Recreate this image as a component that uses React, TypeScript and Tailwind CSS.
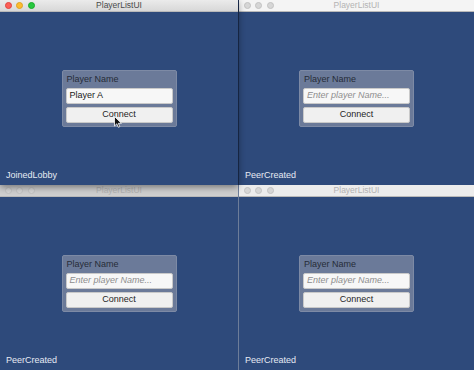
import React from 'react';

type WinProps = {
  active?: boolean;
  status: string;
  value?: string;
  cursor?: boolean;
  titleTone?: string;
};

const Lights: React.FC<{ active?: boolean }> = ({ active }) => (
  <div className="flex items-center gap-[4.5px] pl-[4.5px]">
    {active ? (
      <>
        <span className="w-[7px] h-[7px] rounded-full bg-[#fc5f57] border-[0.5px] border-[#e0443e]" />
        <span className="w-[7px] h-[7px] rounded-full bg-[#fdbc2e] border-[0.5px] border-[#dea123]" />
        <span className="w-[7px] h-[7px] rounded-full bg-[#28c840] border-[0.5px] border-[#1aab29]" />
      </>
    ) : (
      <>
        <span className="w-[7px] h-[7px] rounded-full bg-[#d6d6d6] border-[0.5px] border-[#c2c2c2]" />
        <span className="w-[7px] h-[7px] rounded-full bg-[#d6d6d6] border-[0.5px] border-[#c2c2c2]" />
        <span className="w-[7px] h-[7px] rounded-full bg-[#d6d6d6] border-[0.5px] border-[#c2c2c2]" />
      </>
    )}
  </div>
);

const Cursor = () => (
  <svg width="8" height="12" viewBox="0 0 8 12" className="absolute left-[47px] top-[8px]">
    <path d="M0.5 0.5 L0.5 10 L2.8 7.8 L4.4 11.3 L5.8 10.7 L4.3 7.3 L7.4 7.3 Z" fill="#111" stroke="#fff" strokeWidth="0.8" />
  </svg>
);

const PlayerWindow: React.FC<WinProps> = ({ active, status, value, cursor, titleTone }) => (
  <div
    className={`flex flex-col h-full ${active ? 'relative z-10 shadow-[0_2px_7px_rgba(0,0,0,0.45)]' : ''}`}
  >
    <div
      className={`grid grid-cols-[1fr_auto_1fr] items-center h-[12px] border-b border-[#b9b9b9] ${
        titleTone ?? (active ? 'bg-gradient-to-b from-[#ebebeb] to-[#d8d8d8]' : 'bg-[#f4f4f4]')
      }`}
    >
      <Lights active={active} />
      <span className={`text-[8.5px] leading-none ${active ? 'text-[#4a4a4a]' : 'text-[#b3b3b3]'}`}>PlayerListUI</span>
      <span />
    </div>
    <div className="flex-1 grid grid-rows-[1fr_auto_1fr] justify-items-center bg-[#2e4a7b]">
      <div />
      <div className="w-[115px] bg-[#6b7a99] border border-[#7d8aa5] rounded-[2px] px-[3px] pt-[2px] pb-[3px] flex flex-col gap-[3px]">
        <span className="text-[9px] leading-[12px] text-[#262c38] pl-[1px]">Player Name</span>
        <div className="h-[16px] bg-[#f7f7f7] border border-[#c9c9c9] rounded-[2px] flex items-center px-[3px]">
          {value ? (
            <span className="text-[9px] text-[#1a1a1a]">{value}</span>
          ) : (
            <span className="text-[9px] italic text-[#8d8d8d]">Enter player Name...</span>
          )}
        </div>
        <div className="relative h-[16px] bg-[#f0f0f0] border border-[#c9c9c9] rounded-[2px] flex items-center justify-center">
          <span className="text-[9px] text-[#1f1f1f]">Connect</span>
          {cursor && <Cursor />}
        </div>
      </div>
      <div className="justify-self-stretch flex items-end pl-[6px] pb-[4px]">
        <span className="text-[9px] leading-[11px] text-[#e6ebf3]">{status}</span>
      </div>
    </div>
  </div>
);

export default function App() {
  return (
    <div
      className="w-[474px] h-[370px] overflow-hidden bg-[#2e4a7b] grid grid-cols-[238px_236px] grid-rows-[185px_185px]"
      style={{ fontFamily: '"Liberation Sans", Arial, sans-serif' }}
    >
      <div className="row-start-1 col-start-1 relative z-10">
        <PlayerWindow active status="JoinedLobby" value="Player A" cursor />
      </div>
      <div className="row-start-1 col-start-2 border-l border-[#1c2f52]">
        <PlayerWindow status="PeerCreated" />
      </div>
      <div className="row-start-2 col-start-1">
        <PlayerWindow status="PeerCreated" titleTone="bg-[#cfcfcf]" />
      </div>
      <div className="row-start-2 col-start-2 border-l border-[#6d7d99]">
        <PlayerWindow status="PeerCreated" titleTone="bg-[#ececec]" />
      </div>
    </div>
  );
}
